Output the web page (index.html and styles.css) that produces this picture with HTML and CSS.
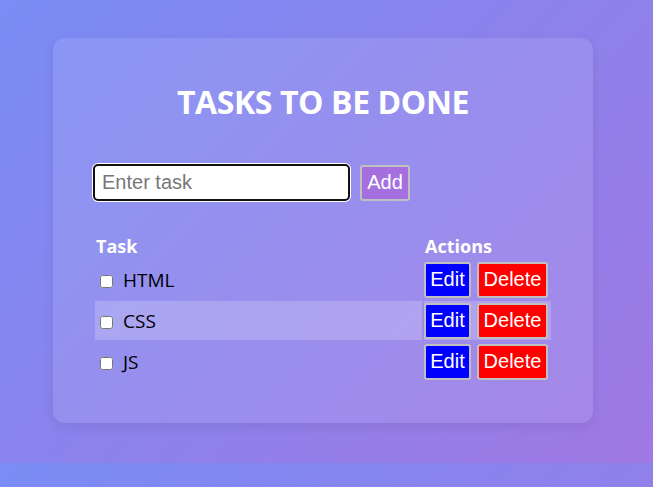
FILE: index.html
```html
<!DOCTYPE html>
<html lang="en">
<head>
<meta charset="utf-8">
<title>Tasks</title>
<link rel="stylesheet" href="styles.css">
</head>
<body>
<div class="card">
  <h1 class="title">TASKS TO BE DONE</h1>
  <div class="add-row">
    <input class="task-input" type="text" placeholder="Enter task">
    <button class="btn btn-add">Add</button>
  </div>
  <table class="task-table">
    <thead>
      <tr><th class="col-task">Task</th><th class="col-actions">Actions</th></tr>
    </thead>
    <tbody>
      <tr>
        <td class="task-cell"><input type="checkbox" class="check"><span class="task-name">HTML</span></td>
        <td class="actions-cell"><button class="btn btn-edit">Edit</button><button class="btn btn-delete">Delete</button></td>
      </tr>
      <tr>
        <td class="task-cell"><input type="checkbox" class="check"><span class="task-name">CSS</span></td>
        <td class="actions-cell"><button class="btn btn-edit">Edit</button><button class="btn btn-delete">Delete</button></td>
      </tr>
      <tr>
        <td class="task-cell"><input type="checkbox" class="check"><span class="task-name">JS</span></td>
        <td class="actions-cell"><button class="btn btn-edit">Edit</button><button class="btn btn-delete">Delete</button></td>
      </tr>
    </tbody>
  </table>
</div>
</body>
</html>
```

FILE: styles.css
```css
body {
  margin: 0;
  padding: 38px 7px 40px 0;
  background: linear-gradient(135deg, #7a8cf5 0%, #9f78e3 100%);
  font-family: "Open Sans", "Noto Sans", sans-serif;
}

.card {
  width: 540px;
  height: 385px;
  box-sizing: border-box;
  margin: 0 auto;
  padding: 40px;
  background: rgba(255, 255, 255, 0.1);
  border-radius: 12px;
  box-shadow: 0 4px 12px rgba(0, 0, 0, 0.08);
}

.title {
  margin: 4px 0 0;
  text-align: center;
  color: #fff;
  font-size: 32px;
  line-height: 40px;
  font-weight: 700;
  letter-spacing: -0.4px;
}

.add-row {
  display: flex;
  align-items: center;
  gap: 10px;
  margin-top: 42px;
}

.task-input {
  width: 257px;
  height: 37px;
  box-sizing: border-box;
  padding: 0 7px;
  font-family: "Liberation Sans", Arial, sans-serif;
  font-size: 20px;
  background: #fff;
  border: 2px solid #111;
  border-radius: 5px;
  box-shadow: 0 0 0 1px #fff;
  outline: none;
  caret-color: #000;
}

.task-input::placeholder {
  color: #777;
}

.btn {
  font-family: "Liberation Sans", Arial, sans-serif;
  font-size: 20px;
  color: #fff;
  border: 2px solid #c0c0c0;
  border-radius: 3px;
  padding: 0 4px;
  height: 36px;
  cursor: pointer;
}

.btn-add {
  background: #a56fe0;
  width: 50px;
}

.task-table {
  width: 460px;
  margin-top: 31px;
  border-spacing: 2px;
}

.task-table th {
  text-align: left;
  color: #fff;
  font-size: 18px;
  font-weight: 700;
  padding: 0 0 0 1px;
  line-height: 24px;
}

.col-actions {
  width: 126px;
}

.task-table tbody tr:nth-child(even) td {
  background: rgba(255, 255, 255, 0.2);
}

.task-cell {
  height: 39px;
  padding: 0 0 0 5px;
  font-size: 19px;
  color: #000;
}

.check {
  width: 13px;
  height: 13px;
  margin: 0 10px 0 0;
  vertical-align: -1px;
}

.actions-cell {
  padding: 0;
  white-space: nowrap;
}

.btn-edit {
  background: #0000ff;
  width: 47px;
  margin-right: 6px;
}

.btn-delete {
  background: #ff0000;
  width: 71px;
}
```
